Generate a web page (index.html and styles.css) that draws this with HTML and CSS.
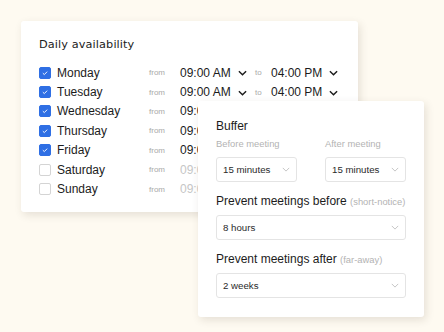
FILE: index.html
```html
<!DOCTYPE html>
<html lang="en">
<head>
  <meta charset="UTF-8">
  <meta name="viewport" content="width=device-width, initial-scale=1.0">
  <title>Availability</title>
  <link rel="stylesheet" href="styles.css">
</head>
<body>
  <div class="stage">
    <!-- Weekly hours -->
    <div class="card availability">
      <h2>Daily availability</h2>
      <div class="days">
        <div class="day">
          <span class="check on"><svg viewBox="0 0 12 12"><polyline points="3.4,6.2 5.2,7.9 8.6,4.4"/></svg></span>
          <span class="name">Monday</span>
          <span class="hint">from</span>
          <span class="time">09:00 AM</span>
          <svg class="caret" viewBox="0 0 10 6"><polyline points="1,1 5,5 9,1"/></svg>
          <span class="hint">to</span>
          <span class="time">04:00 PM</span>
          <svg class="caret" viewBox="0 0 10 6"><polyline points="1,1 5,5 9,1"/></svg>
        </div>
        <div class="day">
          <span class="check on"><svg viewBox="0 0 12 12"><polyline points="3.4,6.2 5.2,7.9 8.6,4.4"/></svg></span>
          <span class="name">Tuesday</span>
          <span class="hint">from</span>
          <span class="time">09:00 AM</span>
          <svg class="caret" viewBox="0 0 10 6"><polyline points="1,1 5,5 9,1"/></svg>
          <span class="hint">to</span>
          <span class="time">04:00 PM</span>
          <svg class="caret" viewBox="0 0 10 6"><polyline points="1,1 5,5 9,1"/></svg>
        </div>
        <div class="day">
          <span class="check on"><svg viewBox="0 0 12 12"><polyline points="3.4,6.2 5.2,7.9 8.6,4.4"/></svg></span>
          <span class="name">Wednesday</span>
          <span class="hint">from</span>
          <span class="time">09:00 AM</span>
          <svg class="caret" viewBox="0 0 10 6"><polyline points="1,1 5,5 9,1"/></svg>
          <span class="hint">to</span>
          <span class="time">04:00 PM</span>
          <svg class="caret" viewBox="0 0 10 6"><polyline points="1,1 5,5 9,1"/></svg>
        </div>
        <div class="day">
          <span class="check on"><svg viewBox="0 0 12 12"><polyline points="3.4,6.2 5.2,7.9 8.6,4.4"/></svg></span>
          <span class="name">Thursday</span>
          <span class="hint">from</span>
          <span class="time">09:00 AM</span>
          <svg class="caret" viewBox="0 0 10 6"><polyline points="1,1 5,5 9,1"/></svg>
          <span class="hint">to</span>
          <span class="time">04:00 PM</span>
          <svg class="caret" viewBox="0 0 10 6"><polyline points="1,1 5,5 9,1"/></svg>
        </div>
        <div class="day">
          <span class="check on"><svg viewBox="0 0 12 12"><polyline points="3.4,6.2 5.2,7.9 8.6,4.4"/></svg></span>
          <span class="name">Friday</span>
          <span class="hint">from</span>
          <span class="time">09:00 AM</span>
          <svg class="caret" viewBox="0 0 10 6"><polyline points="1,1 5,5 9,1"/></svg>
          <span class="hint">to</span>
          <span class="time">04:00 PM</span>
          <svg class="caret" viewBox="0 0 10 6"><polyline points="1,1 5,5 9,1"/></svg>
        </div>
        <div class="day off">
          <span class="check"></span>
          <span class="name">Saturday</span>
          <span class="hint">from</span>
          <span class="time">09:00 AM</span>
          <svg class="caret" viewBox="0 0 10 6"><polyline points="1,1 5,5 9,1"/></svg>
          <span class="hint">to</span>
          <span class="time">04:00 PM</span>
          <svg class="caret" viewBox="0 0 10 6"><polyline points="1,1 5,5 9,1"/></svg>
        </div>
        <div class="day off">
          <span class="check"></span>
          <span class="name">Sunday</span>
          <span class="hint">from</span>
          <span class="time">09:00 AM</span>
          <svg class="caret" viewBox="0 0 10 6"><polyline points="1,1 5,5 9,1"/></svg>
          <span class="hint">to</span>
          <span class="time">04:00 PM</span>
          <svg class="caret" viewBox="0 0 10 6"><polyline points="1,1 5,5 9,1"/></svg>
        </div>
      </div>
    </div>

    <!-- Limits panel, floats over the weekly hours -->
    <div class="card limits">
      <h3>Buffer</h3>
      <div class="pair">
        <div class="field">
          <label>Before meeting</label>
          <div class="select">15 minutes<svg viewBox="0 0 10 6"><polyline points="1,1 5,5 9,1"/></svg></div>
        </div>
        <div class="field">
          <label>After meeting</label>
          <div class="select">15 minutes<svg viewBox="0 0 10 6"><polyline points="1,1 5,5 9,1"/></svg></div>
        </div>
      </div>

      <h3>Prevent meetings before <small>(short-notice)</small></h3>
      <div class="select">8 hours<svg viewBox="0 0 10 6"><polyline points="1,1 5,5 9,1"/></svg></div>

      <h3>Prevent meetings after <small>(far-away)</small></h3>
      <div class="select">2 weeks<svg viewBox="0 0 10 6"><polyline points="1,1 5,5 9,1"/></svg></div>
    </div>
  </div>
</body>
</html>
```

FILE: styles.css
```css
/* Page */
body {
  margin: 0;
  background-color: #fefaf1;
  font-family: "Liberation Sans", Arial, sans-serif;
  color: #1c1c1c;
}

.stage {
  position: relative;
  width: 444px;
  height: 332px;
  padding: 21px 0 0 21px;
  box-sizing: border-box;
}

.card {
  background-color: #fff;
  border-radius: 3px;
  box-shadow: 2px 3px 9px rgba(60, 50, 30, 0.13);
  box-sizing: border-box;
}

/* Daily availability card */
.availability {
  width: 337px;
  height: 191px;
  padding: 16px 18px 0 18px;
}

.availability h2 {
  margin: 0 0 10px 0;
  font-family: "DejaVu Sans", "Liberation Sans", sans-serif;
  font-weight: normal;
  font-size: 11.3px;
  line-height: 16px;
  letter-spacing: 0.1px;
}

.day {
  display: grid;
  grid-template-columns: 18px 92px 31px 58px 17px 16px 58px 10px;
  align-items: center;
  height: 19.4px;
  font-size: 12px;
}

.check {
  width: 12px;
  height: 12px;
  border-radius: 2px;
  border: 1px solid #d4d4d4;
  box-sizing: border-box;
  background-color: #fff;
}

.check.on {
  background-color: #2f6fe4;
  border-color: #2f6fe4;
}

.check svg {
  display: block;
  width: 10px;
  height: 10px;
  fill: none;
  stroke: #fff;
  stroke-width: 1.1;
}

.hint {
  font-size: 8px;
  color: #a9a9a9;
}

.caret {
  width: 9px;
  height: 6px;
  fill: none;
  stroke: #1c1c1c;
  stroke-width: 1.6;
  margin-top: 1px;
}

.day.off .time {
  color: #c6c6c6;
}

/* Limits card */
.limits {
  position: absolute;
  left: 198px;
  top: 101px;
  width: 226px;
  height: 216px;
  padding: 18px 18px 20px 18px;
}

.limits h3 {
  margin: 12px 0 6px 0;
  font-weight: normal;
  font-size: 12px;
  line-height: 14px;
}

.limits h3:first-child {
  margin-top: 0;
  margin-bottom: 5px;
}

.limits small {
  font-size: 9.4px;
  color: #b3b3b3;
}

.pair {
  display: grid;
  grid-template-columns: 81px 81px;
  justify-content: space-between;
}

.field label {
  display: block;
  font-size: 9.4px;
  line-height: 12px;
  color: #b3b3b3;
  margin-bottom: 7px;
}

.select {
  display: flex;
  justify-content: space-between;
  align-items: center;
  height: 25px;
  padding: 0 6px 0 6px;
  border: 1px solid #e4e4e4;
  border-radius: 3px;
  box-sizing: border-box;
  font-size: 9.7px;
  color: #2a2a2a;
}

.select svg {
  width: 8px;
  height: 5px;
  fill: none;
  stroke: #b8b8b8;
  stroke-width: 1;
}
```
